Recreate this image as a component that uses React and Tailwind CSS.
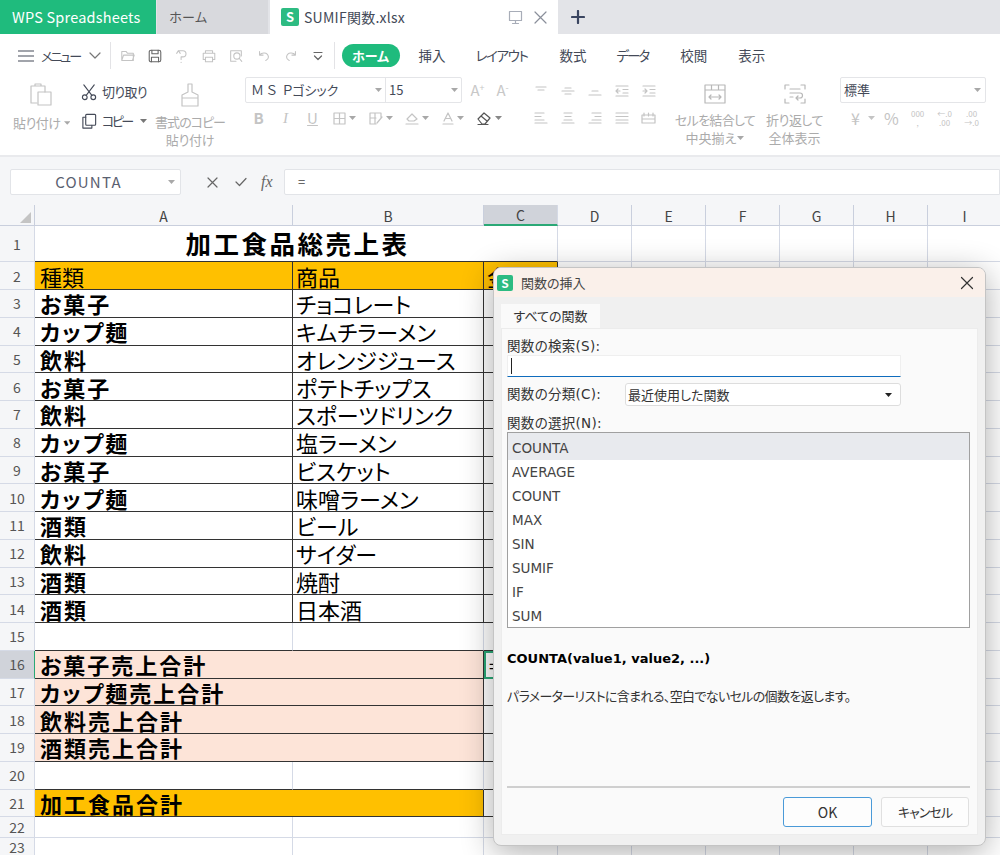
import React from 'react';

const Ic = ({ w = 18, h = 18, vb = '0 0 18 18', sw = 1.2, children, className = '' }) => (
  <svg width={w} height={h} viewBox={vb} fill="none" stroke="currentColor" strokeWidth={sw} strokeLinecap="round" strokeLinejoin="round" className={className}>{children}</svg>
);
const Tri = ({ className = 'text-[#a8a8a8]' }) => (
  <svg width="7" height="4" viewBox="0 0 7 4" className={className}><path d="M0 0h7L3.5 4z" fill="currentColor" /></svg>
);
const SLogo = ({ className, text }) => (
  <div className={`flex items-center justify-center rounded-[2px] bg-[#2dbb82] text-white font-bold ${className} ${text}`}>S</div>
);

const qa = [
  <path d="M2 14V4h5l1.5 2H15v8zM2 14l2-6h12l-2 6" />,
  <><rect x="2.5" y="2.5" width="13" height="13" rx="2" /><path d="M5.5 2.5v4h7v-4M5 15.5v-5h8v5" /></>,
  <path d="M5 3h5a3 3 0 0 1 0 7H8v3M3 6l2-3 2 3M8 16v.2" />,
  <><path d="M5 6V3h8v3M5 13H2.5V6h13v7H13" /><rect x="5" y="10.5" width="8" height="5" /></>,
  <><path d="M15 9V3H3v12h6" /><circle cx="10" cy="9" r="3.5" /><path d="M12.5 11.5L15.5 15" /></>,
  <path d="M4 4v4h4M4 8c2-3 9-4 10 2 0 2-1 3-3 4" />,
  <path d="M14 4v4h-4M14 8c-2-3-9-4-10 2 0 2 1 3 3 4" />,
];

const Tab = ({ className, children }) => <span className={`text-[13.5px] text-[#444a58] ${className}`}>{children}</span>;

const Cell2 = ({ children }) => <div className="flex h-[29px] w-[27px] items-center justify-center text-[#c4c4c4]">{children}</div>;

function Ribbon() {
  return (
    <div className="h-[121px] bg-white [font-feature-settings:'palt']">
      <div className="flex h-[43px] items-center pl-[18px]">
        <Ic w={16} h={14} vb="0 0 16 14" sw={1.2} className="text-[#444a58]"><path d="M0 2h16M0 7h16M0 12h16" /></Ic>
        <span className="ml-[7px] w-[39px] whitespace-nowrap text-[13px] tracking-[-2px] text-[#444a58]">メニュー</span>
        <Ic w={12} h={8} vb="0 0 12 8" className="ml-[9px] text-[#777]"><path d="M1 1l5 5 5-5" /></Ic>
        <div className="ml-[9px] h-[27px] w-px bg-[#e3e3e6]" />
        <div className="ml-[3px] flex">
          {qa.map((p, i) => (
            <div key={i} className={`flex h-[20px] w-[27.2px] items-center justify-center ${i === 1 ? 'text-[#666]' : 'text-[#c4c4c4]'}`}>
              <Ic w={16} h={16}>{p}</Ic>
            </div>
          ))}
          <div className="flex h-[20px] w-[27.2px] items-center justify-center text-[#666]">
            <Ic w={10} h={10} vb="0 0 10 10"><path d="M1 1.5h8M1.5 5L5 8.5 8.5 5" /></Ic>
          </div>
        </div>
        <div className="ml-[2px] h-[27px] w-px bg-[#e3e3e6]" />
        <div className="ml-[7px] flex h-[23px] w-[58px] items-center justify-center rounded-full bg-[#1fbb7d] text-[13px] font-bold text-white">ホーム</div>
        <Tab className="ml-[19px]">挿入</Tab>
        <Tab className="ml-[30px] tracking-[-1.4px]">レイアウト</Tab>
        <Tab className="ml-[32px]">数式</Tab>
        <Tab className="ml-[30px] tracking-[-2px]">データ</Tab>
        <Tab className="ml-[32px]">校閲</Tab>
        <Tab className="ml-[31px]">表示</Tab>
      </div>

      <div className="flex h-[78px] text-[13px] leading-[18px]">
        <div className="ml-[13px] flex w-[57px] flex-col">
          <div className="ml-[16px] mt-[6px] h-[31px] text-[#c4c4c4]">
            <Ic w={24} h={24} vb="0 0 24 24"><path d="M8 20H2V3h14v6M6 3V1h6v2" /><rect x="9" y="9" width="13" height="13" /></Ic>
          </div>
          <div className="flex items-center gap-[3px] whitespace-nowrap tracking-[-0.5px] text-[#ababab]">貼り付け<Tri /></div>
        </div>
        <div className="ml-[11px] flex w-[74px] flex-col">
          <div className="mt-[6px] flex h-[18px] items-center text-[#444a58]">
            <Ic w={17} h={17}><circle cx="4" cy="14" r="2.5" /><circle cx="13" cy="14" r="2.5" /><path d="M5.5 12L14 1M11.5 12L3 1" /></Ic>
            <span className="ml-[4px] text-[13px] tracking-[-0.7px]">切り取り</span>
          </div>
          <div className="mt-[11px] flex h-[18px] items-center text-[#444a58]">
            <Ic w={17} h={17}><rect x="5" y="1.5" width="10.5" height="11.5" rx="1" /><path d="M5 4.5H2V16h9.5v-3" /></Ic>
            <span className="ml-[4px] text-[13px] tracking-[-2.5px]">コピー</span>
            <Tri className="ml-[8px] text-[#777]" />
          </div>
        </div>
        <div className="flex w-[70px] flex-col items-center text-center text-[#ababab]">
          <div className="mt-[6px] h-[30px] text-[#c4c4c4]">
            <Ic w={22} h={24} vb="0 0 22 24"><path d="M9 1h4v8l6 3v3H3v-3l6-3zM3 15h16v8H3z" /></Ic>
          </div>
          <div className="whitespace-nowrap tracking-[-1px]">書式のコピー</div>
          <div className="tracking-[-0.3px]">貼り付け</div>
        </div>
        <div className="ml-[20px] flex w-[272px] flex-col">
          <div className="flex items-center">
            <div className="flex h-[26px] w-[217px] rounded-[2px] border border-[#e4e5e8] text-[13px] text-[#444a58]">
              <div className="flex w-[140px] items-center justify-between border-r border-[#e4e5e8] pl-[5px] pr-[3px]"><span className="whitespace-pre">Ｍ Ｓ  Ｐゴシック</span><Tri /></div>
              <div className="flex flex-1 items-center justify-between pl-[3px] pr-[3px]">15<Tri /></div>
            </div>
            <div className="flex w-[27px] items-start justify-center pl-[4px] text-[15px] text-[#c8c8c8]">A<span className="text-[9px] leading-[14px]">+</span></div>
            <div className="flex w-[27px] items-start justify-center text-[15px] text-[#c8c8c8]">A<span className="text-[9px] leading-[14px]">-</span></div>
          </div>
          <div className="mt-[2px] flex h-[26px] items-center text-[#c4c4c4]">
            <div className="flex w-[27px] justify-center text-[15px] font-bold">B</div>
            <div className="flex w-[27px] justify-center font-['Liberation_Serif',serif] text-[15px] italic">I</div>
            <div className="flex w-[27px] justify-center text-[15px] underline">U</div>
            <div className="flex w-[36px] items-center justify-center gap-[3px]"><Ic w={13} h={13} vb="0 0 13 13"><path d="M1 1h11v11H1zM6.5 1v11M1 6.5h11" /></Ic><Tri /></div>
            <div className="flex w-[37px] items-center justify-center gap-[3px]"><Ic w={14} h={13} vb="0 0 14 13"><path d="M1 1h11v5M1 1v11h6M1 6h6M6 1v11M8 11l5-6" /></Ic><Tri /></div>
            <div className="flex w-[36px] items-center justify-center gap-[3px]"><Ic w={14} h={13} vb="0 0 14 13"><path d="M2 7l5-5 5 5-3 2H4zM1 12h12" /></Ic><Tri /></div>
            <div className="flex w-[36px] items-center justify-center gap-[3px]"><Ic w={12} h={13} vb="0 0 12 13"><path d="M2 9l4-8 4 8M3.5 6.5h5M1 12h10" /></Ic><Tri /></div>
            <div className="flex w-[36px] items-center justify-center gap-[3px] text-[#555]"><Ic w={15} h={13} vb="0 0 15 13"><path d="M1 7l6-6 6 5-5 6H5zM4 4l6 5M1 12.5h10" /></Ic><Tri className="text-[#888]" /></div>
          </div>
        </div>
        <div className="ml-[10px] flex w-[135px] flex-col text-[#d0d0d0]">
          <div className="flex h-[28px] items-center">
            <Cell2><Ic w={14} h={10} vb="0 0 14 10"><path d="M2 1h10M4 4h6" /></Ic></Cell2>
            <Cell2><Ic w={14} h={10} vb="0 0 14 10"><path d="M4 2h6M1 5h12M4 8h6" /></Ic></Cell2>
            <Cell2><Ic w={14} h={10} vb="0 0 14 10"><path d="M4 5h6M1 9h12" /></Ic></Cell2>
            <Cell2><Ic w={14} h={12} vb="0 0 14 12"><path d="M1 1h12M8 4.5h5M8 8h5M1 11h12M5 6H1M3 4L1 6l2 2" /></Ic></Cell2>
            <Cell2><Ic w={14} h={12} vb="0 0 14 12"><path d="M1 1h12M8 4.5h5M8 8h5M1 11h12M1 6h4M3 4l2 2-2 2" /></Ic></Cell2>
          </div>
          <div className="flex h-[26px] items-center">
            <Cell2><Ic w={14} h={12} vb="0 0 14 12"><path d="M1 1h9M1 4.500h6M1 8h9M1 11h12" /></Ic></Cell2>
            <Cell2><Ic w={14} h={12} vb="0 0 14 12"><path d="M3 1h8M4 4.500h6M3 8h8M1 11h12" /></Ic></Cell2>
            <Cell2><Ic w={14} h={12} vb="0 0 14 12"><path d="M4 1h9M7 4.500h6M4 8h9M1 11h12" /></Ic></Cell2>
            <Cell2><Ic w={14} h={12} vb="0 0 14 12"><path d="M1 1h12M1 4.500h12M1 8h12M1 11h12" /></Ic></Cell2>
            <Cell2><Ic w={15} h={12} vb="0 0 15 12"><path d="M1 3h13v8H1zM1 7h13M3 1v3M12 1v3M7.500 1v3" /></Ic></Cell2>
          </div>
        </div>
        <div className="ml-[9px] flex w-[88px] flex-col items-center text-center text-[#ababab]">
          <div className="mt-[7px] h-[27px] text-[#b8b8b8]">
            <Ic w={22} h={20} vb="0 0 22 20"><path d="M1 1h20v18H1zM1 6h20M7.500 1v5M14.500 1v5M5 13h12M7 11l-2 2 2 2M15 11l2 2-2 2" /></Ic>
          </div>
          <div className="whitespace-nowrap tracking-[-0.7px]">セルを結合して</div>
          <div className="flex items-center gap-[1px]">中央揃え<Tri /></div>
        </div>
        <div className="ml-[5px] flex w-[61px] flex-col items-center text-center text-[#ababab]">
          <div className="mt-[7px] h-[27px] text-[#b8b8b8]">
            <Ic w={22} h={20} vb="0 0 22 20"><path d="M1 5V1h4M17 1h4v4M1 15v4h4M21 15v4h-4M6 5h10M6 9h10a2 2 0 0 1 0 5h-4M14 12l-2 2 2 2M6 13h3" /></Ic>
          </div>
          <div className="whitespace-nowrap tracking-[-0.5px]">折り返して</div>
          <div className="whitespace-nowrap">全体表示</div>
        </div>
        <div className="ml-[15px] flex w-[146px] flex-col">
          <div className="flex h-[26px] items-center justify-between rounded-[2px] border border-[#e4e5e8] pl-[3px] pr-[4px] text-[13px] text-[#444a58]">標準<Tri /></div>
          <div className="mt-[2px] flex h-[26px] items-center text-[#c4c4c4]">
            <div className="ml-[11px] text-[16px]">¥</div>
            <Tri className="ml-[8px]" />
            <div className="ml-[9px] text-[16px]">%</div>
            <div className="ml-[10px] flex w-[18px] flex-col items-center text-[8px] leading-[9px]"><span>000</span><span>,</span></div>
            <div className="ml-[8px] flex w-[20px] flex-col items-center text-[8px] leading-[9px]"><span>←.0</span><span>.00</span></div>
            <div className="ml-[7px] flex w-[20px] flex-col items-center text-[8px] leading-[9px]"><span>.00</span><span>→.0</span></div>
          </div>
        </div>
      </div>
    </div>
  );
}

const hdr = ['A', 'B', 'C', 'D', 'E', 'F', 'G', 'H', 'I'];
const items = [
  ['お菓子', 'チョコレート'], ['カップ麺', 'キムチラーメン'], ['飲料', 'オレンジジュース'], ['お菓子', 'ポテトチップス'],
  ['飲料', 'スポーツドリンク'], ['カップ麺', '塩ラーメン'], ['お菓子', 'ビスケット'], ['カップ麺', '味噌ラーメン'],
  ['酒類', 'ビール'], ['飲料', 'サイダー'], ['酒類', '焼酎'], ['酒類', '日本酒'],
];

const gridCell = 'border-r border-b border-[#d5dae6] bg-white';
const dark = 'border-r border-b border-[#333] bg-white';
const A = "flex items-center pl-[5px] text-[22px] leading-[26px] font-bold tracking-[2px] text-black whitespace-nowrap [font-feature-settings:'palt']";
const B = "flex items-center pl-[3px] text-[22px] leading-[26px] text-black whitespace-nowrap [font-feature-settings:'palt']";

const RowNo = ({ n, active }) => (
  <div className={`flex items-center justify-center border-b border-r text-[14px] leading-[18px] text-[#555] ${active ? 'bg-[#d0d3da] border-r-[#2aa876] border-b-[#d5dae6]' : 'bg-[#f5f6f8] border-[#d5dae6]'}`}>{n}</div>
);
const Blanks = ({ k }) => [0, 1, 2, 3, 4, 5].map((i) => <div key={`${k}-${i}`} className={gridCell} />);

function Sheet() {
  const rows = [];
  const push = (n, cells, active) => {
    rows.push(<RowNo key={`n${n}`} n={n} active={active} />);
    rows.push(<React.Fragment key={`c${n}`}>{cells}</React.Fragment>);
    rows.push(<React.Fragment key={`b${n}`}><Blanks k={n} /></React.Fragment>);
  };
  push(1, <div className="col-span-3 flex items-center justify-center border-b border-r border-b-[#333] border-r-[#d5dae6] bg-white pl-[3px] text-[25.5px] font-bold tracking-[2.5px] text-black">加工食品総売上表</div>);
  push(2, <>
    <div className={`${dark} ${B} !bg-[#ffc000] !pl-[5px]`}>種類</div>
    <div className={`${dark} ${B} !bg-[#ffc000]`}>商品</div>
    <div className={`${dark} ${B} !bg-[#ffc000]`}>金額</div>
  </>);
  items.forEach((it, i) => push(i + 3, <>
    <div className={`${dark} ${A}`}>{it[0]}</div>
    <div className={`${dark} ${B}`}>{it[1]}</div>
    <div className={dark} />
  </>));
  const blankDark = <>
    <div className="border-b border-r border-b-[#333] border-r-[#d5dae6] bg-white" />
    <div className="border-b border-r border-b-[#333] border-r-[#d5dae6] bg-white" />
    <div className={dark} />
  </>;
  push(15, blankDark);
  ['お菓子売上合計', 'カップ麺売上合計', '飲料売上合計', '酒類売上合計'].forEach((t, i) => push(i + 16, <>
    <div className={`col-span-2 ${dark} ${A} !bg-[#fde4d8]`}>{t}</div>
    {i === 0
      ? <div className="flex items-center border-2 border-[#2aa876] bg-white pl-[3px] text-[18px] leading-[22px] text-black">=</div>
      : <div className={dark} />}
  </>, i === 0));
  push(20, blankDark);
  push(21, <>
    <div className={`col-span-2 ${dark} ${A} !bg-[#ffc000]`}>加工食品合計</div>
    <div className={dark} />
  </>);
  [22, 23].forEach((n) => push(n, <><div className={gridCell} /><div className={gridCell} /><div className={gridCell} /></>));

  return (
    <div className="grid grid-cols-[35px_258px_191px_74px_74px_74px_74px_74px_74px_74px] grid-rows-[21px_36px_28px_repeat(19,27.75px)_20.5px_20px]">
      <div className="flex items-end justify-end border-b border-r border-[#c9cfdd] bg-[#f5f6f8] pb-[2px] pr-[3px]">
        <svg width="11" height="11" viewBox="0 0 11 11"><path d="M11 0v11H0z" fill="#c4c4c4" /></svg>
      </div>
      {hdr.map((h, i) => (
        <div key={h} className={`flex items-center justify-center border-r pt-[2px] text-[14px] text-[#444] ${i === 2 ? 'border-b-2 border-b-[#2aa876] border-r-[#d5dae6] bg-[#d0d3da]' : 'border-b border-[#c9cfdd] bg-[#f5f6f8]'}`}>{h}</div>
      ))}
      {rows}
    </div>
  );
}

function Dialog() {
  const list = ['COUNTA', 'AVERAGE', 'COUNT', 'MAX', 'SIN', 'SUMIF', 'IF', 'SUM'];
  const label = "font-['DejaVu_Sans','Noto_Sans_CJK_JP',sans-serif] text-[13.5px] tracking-[0.3px]";
  return (
    <div className="absolute left-[493px] top-[267px] h-[579px] w-[493px] overflow-hidden rounded-[8px] border border-[#c4c4c4] bg-[#f0f0f0] text-[13px] text-[#333] shadow-[0_6px_32px_rgba(0,0,0,0.32)] [font-feature-settings:'palt']">
      <div className="flex h-[29px] items-center bg-[#faf0ea] pl-[3px] pr-[11px]">
        <SLogo className="h-[16px] w-[16px]" text="text-[12px]" />
        <span className="ml-[8px] text-[#444]">関数の挿入</span>
        <Ic w={14} h={14} vb="0 0 14 14" sw={1.2} className="ml-auto text-[#333]"><path d="M1.500 1.500l11 11M12.500 1.500l-11 11" /></Ic>
      </div>
      <div className="ml-[7px] mt-[7px] flex h-[24px] w-[99px] items-center justify-center bg-[#fafafa]">すべての関数</div>
      <div className="mx-[7px] h-[507px] border border-[#ececec] bg-[#fafafa] pl-[5px] pt-[9px]">
        <div className={`h-[16px] leading-[16px] ${label}`}>関数の検索(S):</div>
        <div className="mt-[1px] flex h-[22px] w-[394px] items-center border border-[#efefef] border-b-[#0f6cbd] bg-white pl-[3px]">
          <div className="h-[16px] w-px bg-[#222]" />
        </div>
        <div className="mt-[6px] flex items-center">
          <div className={`w-[118px] ${label}`}>関数の分類(C):</div>
          <div className="flex h-[23px] w-[276px] items-center justify-between rounded-[3px] border border-[#ddd] bg-white pl-[2px] pr-[8px]">最近使用した関数<Tri className="text-[#222]" /></div>
        </div>
        <div className={`mt-[9px] h-[16px] leading-[16px] ${label}`}>関数の選択(N):</div>
        <div className="mt-[1px] h-[196px] w-[463px] overflow-hidden border border-[#a0a0a0] bg-white pt-[3px]">
          {list.map((l, i) => (
            <div key={l} className={`flex items-center pl-[4px] font-['DejaVu_Sans',sans-serif] text-[13.5px] text-[#444] ${i === 0 ? '-mt-[3px] h-[27px] bg-[#e8eaee] pt-[3px]' : 'h-[24px]'}`}>{l}</div>
          ))}
        </div>
        <div className="mt-[23px] h-[16px] font-['DejaVu_Sans',sans-serif] text-[13px] font-bold leading-[16px] text-black">COUNTA(value1, value2, ...)</div>
        <div className="mt-[21px] h-[16px] whitespace-nowrap text-[13px] leading-[16px] tracking-[-0.65px]">パラメーターリストに含まれる、空白でないセルの個数を返します。</div>
        <div className="mt-[82px] h-[2px] w-[463px] bg-[#cfcfcf]" />
        <div className="mt-[9px] flex w-[462px] justify-end gap-[9px]">
          <div className="flex h-[30px] w-[89px] items-center justify-center rounded-[3px] border border-[#4a9ad8] bg-[#fdfdfd] text-[14px]">OK</div>
          <div className="flex h-[30px] w-[88px] items-center justify-center rounded-[3px] border border-[#e0e0e0] bg-[#fdfdfd] tracking-[-1px]">キャンセル</div>
        </div>
      </div>
    </div>
  );
}

export default function App() {
  return (
    <div className="relative h-[855px] w-[1000px] overflow-hidden bg-[#f5f6f8] font-['Noto_Sans_CJK_JP','Noto_Sans',sans-serif]">
      <div className="flex h-[34px] items-stretch bg-[#e3e4e8]">
        <div className="flex w-[156px] items-center whitespace-nowrap bg-[#1fbb7d] pl-[12px] text-[14.5px] tracking-[0.2px] text-white">WPS Spreadsheets</div>
        <div className="ml-[1px] flex w-[111px] items-center bg-[#d8d9dd] pl-[12px] text-[13px] text-[#555]">ホーム</div>
        <div className="ml-[2px] flex w-[288px] items-center bg-white pl-[11px] text-[#555]">
          <SLogo className="h-[18px] w-[18px]" text="text-[13px]" />
          <span className="ml-[5px] text-[14px] tracking-[0.25px] text-[#444a58]">SUMIF関数.xlsx</span>
          <Ic w={15} h={15} vb="0 0 15 15" className="ml-[103px] text-[#a8adb8]"><path d="M1.500 1.500h12v9h-12zM7.500 10.500v3M4.500 13.500h6" /></Ic>
          <Ic w={13} h={13} vb="0 0 13 13" className="ml-[11px] text-[#8a8f9a]"><path d="M1 1l11 11M12 1L1 12" /></Ic>
        </div>
        <div className="flex w-[40px] items-center justify-center">
          <Ic w={14} h={14} vb="0 0 14 14" sw={2.2} className="text-[#3a4560]"><path d="M7 1v12M1 7h12" /></Ic>
        </div>
      </div>
      <Ribbon />
      <div className="flex h-[50px] items-start border-t-2 border-t-[#e9eaed] pt-[12px]">
        <div className="ml-[10px] flex h-[26px] w-[171px] items-center rounded-[2px] border border-[#e2e4e8] bg-white pr-[5px]">
          <span className="flex-1 pr-[2px] text-center text-[15px] tracking-[1.2px] text-[#5a6070]">COUNTA</span>
          <Tri />
        </div>
        <div className="flex h-[26px] w-[103px] items-center text-[#666]">
          <Ic w={11} h={11} vb="0 0 11 11" className="ml-[26px]"><path d="M1 1l9 9M10 1l-9 9" /></Ic>
          <Ic w={12} h={10} vb="0 0 12 10" className="ml-[17px]"><path d="M1 5l3.500 3.500L11 1.500" /></Ic>
          <span className="ml-[14px] font-['Liberation_Serif',serif] text-[16px] italic">fx</span>
        </div>
        <div className="flex h-[26px] flex-1 items-center rounded-l-[2px] border border-[#e2e4e8] bg-white pl-[13px] text-[13px] text-[#444]">=</div>
      </div>
      <Sheet />
      <Dialog />
    </div>
  );
}
